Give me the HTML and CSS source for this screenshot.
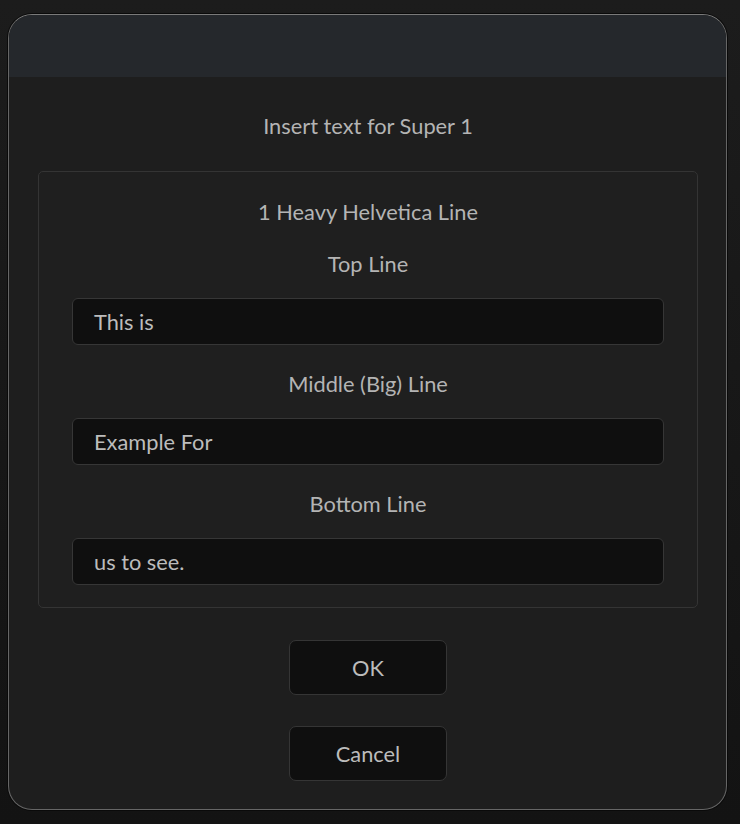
FILE: index.html
```html
<!DOCTYPE html>
<html>
<head>
<meta charset="utf-8">
<link rel="stylesheet" href="styles.css">
</head>
<body>
<div class="window">
  <div class="titlebar"></div>
  <div class="content">
    <div class="heading">Insert text for Super 1</div>
    <div class="group">
      <div class="label">1 Heavy Helvetica Line</div>
      <div class="label field-label">Top Line</div>
      <div class="input">This is</div>
      <div class="label field-label">Middle (Big) Line</div>
      <div class="input">Example For</div>
      <div class="label field-label">Bottom Line</div>
      <div class="input">us to see.</div>
    </div>
    <div class="buttons">
      <div class="btn">OK</div>
      <div class="btn">Cancel</div>
    </div>
  </div>
</div>
</body>
</html>
```
FILE: styles.css
```css
html, body {
  margin: 0;
  padding: 0;
}
body {
  width: 740px;
  height: 824px;
  background: linear-gradient(#1c1c1c, #131313);
  font-family: Lato, "Open Sans", sans-serif;
  color: #b4b4b4;
  overflow: hidden;
}
.window {
  margin: 14px 13px 0 8px;
  height: 796px;
  box-sizing: border-box;
  border: 1px solid #666;
  border-top-color: #7a7a7a;
  border-radius: 24px;
  box-shadow: 0 0 0 1px #0a0a0a;
  background: #1e1e1e;
  overflow: hidden;
  display: flex;
  flex-direction: column;
}
.titlebar {
  height: 62px;
  background: #25282c;
  flex: none;
}
.content {
  display: flex;
  flex-direction: column;
  align-items: center;
  padding: 37px 28px 0 29px;
}
.heading {
  font-size: 21.8px;
  line-height: 24px;
  margin-bottom: 33px;
}
.group {
  align-self: stretch;
  border: 1px solid #343434;
  border-radius: 5px;
  background: #1f1f1f;
  padding: 28px 33px 22px 33px;
  display: flex;
  flex-direction: column;
  align-items: center;
}
.label {
  font-size: 21.8px;
  line-height: 24px;
}
.field-label {
  margin-top: 28px;
  margin-bottom: 22px;
}
.group .input + .field-label {
  margin-top: 27px;
}
.input {
  align-self: stretch;
  box-sizing: border-box;
  height: 47px;
  border: 1px solid #363636;
  border-radius: 6px;
  background: #0f0f0f;
  padding: 0 21px;
  font-size: 21.8px;
  line-height: 45px;
  color: #bcbcbc;
}
.buttons {
  display: flex;
  flex-direction: column;
  align-items: center;
  gap: 31px;
  margin-top: 32px;
}
.btn {
  width: 158px;
  height: 55px;
  box-sizing: border-box;
  border: 1px solid #353535;
  border-radius: 7px;
  background: #0f0f0f;
  font-size: 21.8px;
  line-height: 53px;
  text-align: center;
  color: #bcbcbc;
}
```
